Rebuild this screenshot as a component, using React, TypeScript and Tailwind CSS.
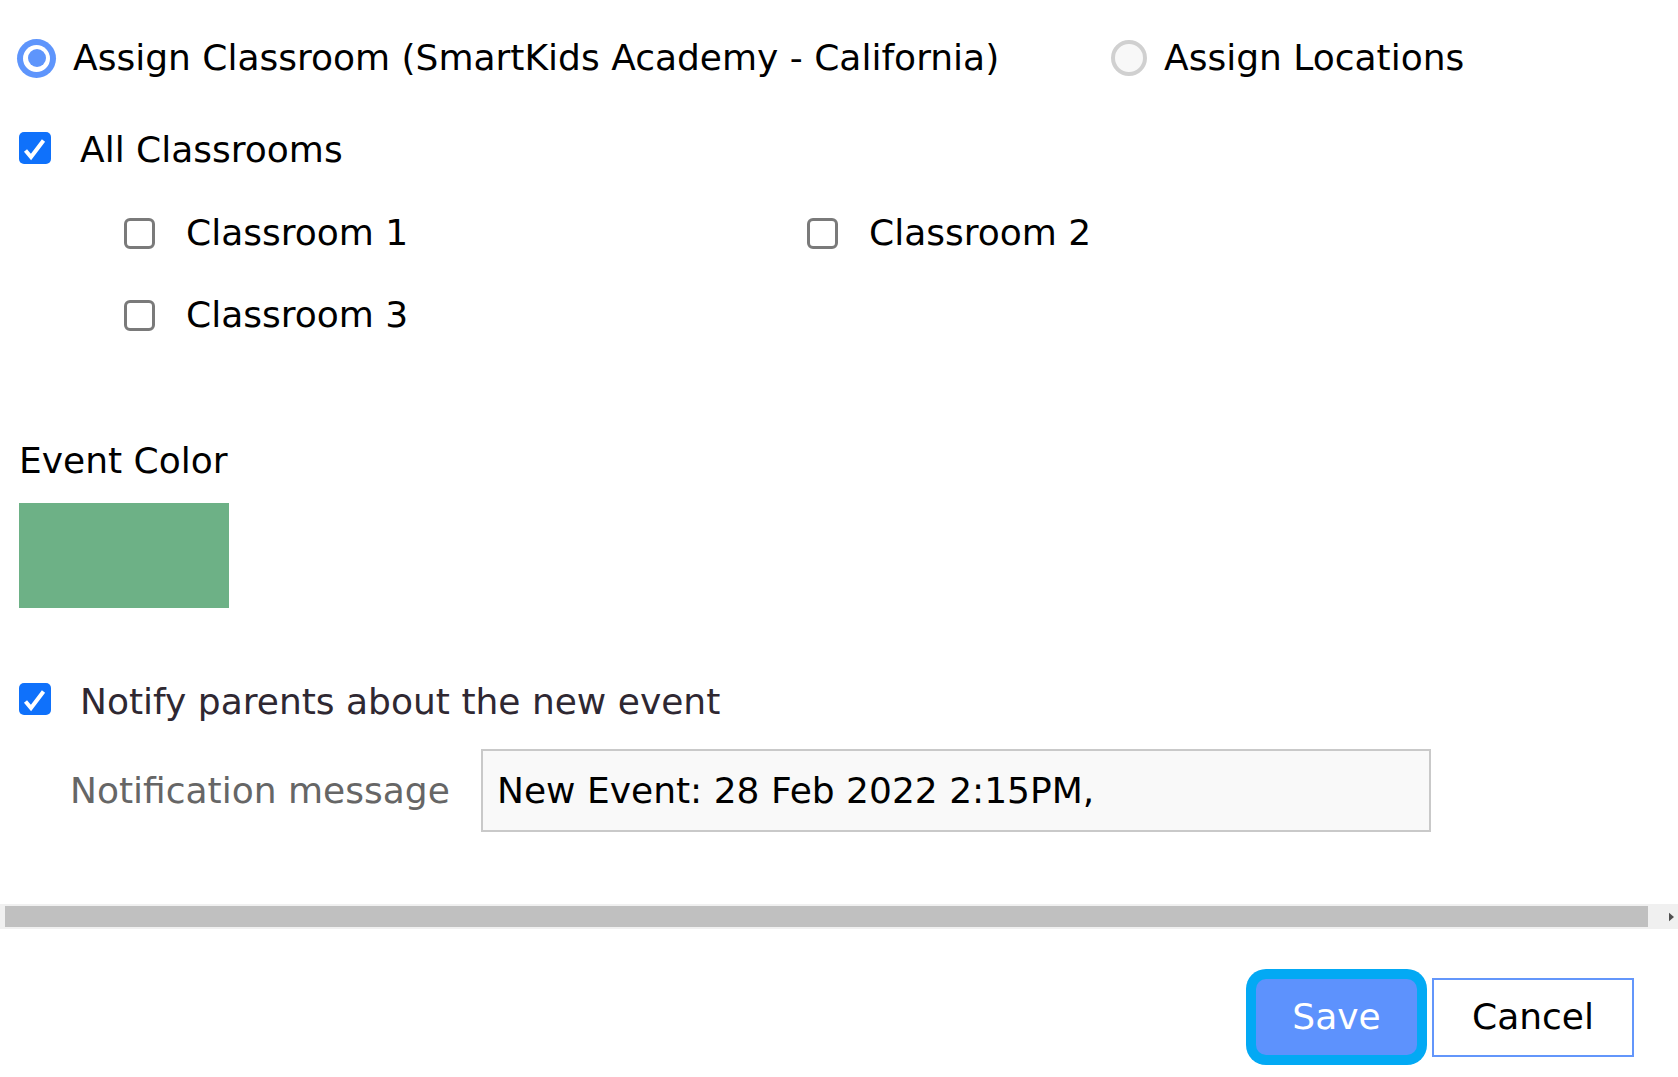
import React from "react";

const font = { fontFamily: '"DejaVu Sans", "Liberation Sans", sans-serif' };

function CheckedBox() {
  return (
    <span className="block h-[32px] w-[32px] shrink-0 rounded-[5px] bg-[#0f71fb]">
      <svg viewBox="0 0 32 32" className="h-[32px] w-[32px]" fill="none">
        <path d="M6.5 18.5L12 25L24.5 8.5" stroke="#fff" strokeWidth="4" strokeLinejoin="miter" />
      </svg>
    </span>
  );
}

function EmptyBox() {
  return <span className="block h-[31px] w-[31px] shrink-0 rounded-[6px] border-[3px] border-[#7a7a7a] bg-white" />;
}

export default function App() {
  const classrooms = ["Classroom 1", "Classroom 2", "Classroom 3"];

  return (
    <div style={font} className="h-[1077px] w-[1678px] overflow-hidden bg-white text-[36px] text-black">
      {/* target radios */}
      <div className="mt-[20px] flex h-[76px] items-center pl-[17px]">
        <label className="flex w-[1094px] items-center gap-[17px]">
          <span className="flex h-[39px] w-[39px] items-center justify-center rounded-full bg-[#5e95fc]">
            <span className="flex h-[27px] w-[27px] items-center justify-center rounded-full bg-white">
              <span className="h-[18px] w-[18px] rounded-full bg-[#5e95fc]" />
            </span>
          </span>
          <span>Assign Classroom (SmartKids Academy - California)</span>
        </label>
        <label className="flex items-center gap-[17px]">
          <span className="h-[36px] w-[36px] rounded-full border-[4px] border-[#d0d0d0] bg-[#f8f8f8]" />
          <span>Assign Locations</span>
        </label>
      </div>

      <div className="mt-[22px] flex h-[60px] items-center gap-[29px] pl-[19px]">
        <CheckedBox />
        <span className="pt-[4px]">All Classrooms</span>
      </div>

      <div className="mt-[14px] grid grid-cols-[683px_683px] pl-[124px]">
        {classrooms.map((c) => (
          <div key={c} className="flex h-[82px] items-center gap-[31px]">
            <EmptyBox />
            <span>{c}</span>
          </div>
        ))}
      </div>

      {/* event colour */}
      <div className="mt-[80px] flex h-[50px] items-center pl-[19px]">Event Color</div>
      <div className="ml-[19px] mt-[17px] h-[105px] w-[210px] bg-[#6db186]" />

      {/* notification */}
      <div className="mt-[61px] flex h-[60px] items-center gap-[29px] pl-[19px] text-[#2f2832]">
        <CheckedBox />
        <span className="pt-[6px]">Notify parents about the new event</span>
      </div>

      <div className="mt-[20px] flex items-center pl-[70px]">
        <span className="w-[411px] text-[#666666]">Notification message</span>
        <div className="flex h-[83px] w-[950px] items-center border-2 border-[#c9c9c9] bg-[#f9f9f9] pl-[14px]">
          New Event: 28 Feb 2022 2:15PM,
        </div>
      </div>

      {/* horizontal scrollbar */}
      <div className="mt-[72px] flex h-[25px] items-center bg-[#f0f0f0] pl-[5px]">
        <div className="h-[21px] w-[1643px] bg-[#c0c0c0]" />
        <div className="flex flex-1 items-center justify-end pr-[4px]">
          <svg viewBox="0 0 6 10" className="h-[10px] w-[5px]">
            <path d="M0 0L6 5L0 10Z" fill="#505050" />
          </svg>
        </div>
      </div>

      {/* footer buttons */}
      <div className="mt-[40px] flex items-center justify-end gap-[5px] pr-[44px]">
        <div className="rounded-[20px] bg-[#03a9f4] p-[10px]">
          <button className="flex h-[76px] w-[161px] items-center justify-center rounded-[10px] bg-[#5d92fd] text-white">
            Save
          </button>
        </div>
        <button className="flex h-[79px] w-[202px] items-center justify-center border-2 border-[#6396fb] bg-white text-black">
          Cancel
        </button>
      </div>
    </div>
  );
}
